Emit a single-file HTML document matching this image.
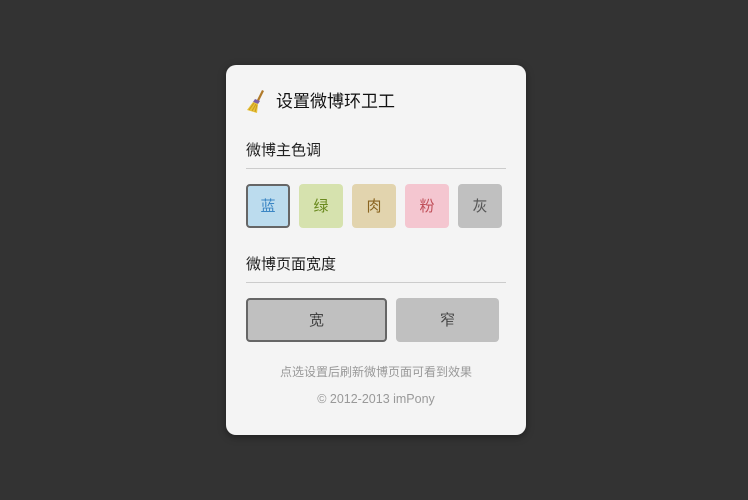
<!DOCTYPE html>
<html><head><meta charset="utf-8"><style>
*{margin:0;padding:0;box-sizing:border-box}
body{width:748px;height:500px;background:#333;font-family:"Liberation Sans","Noto Sans CJK SC",sans-serif;position:relative;overflow:hidden}
.card{position:absolute;left:226px;top:65px;width:300px;height:370px;background:#f4f4f4;border-radius:10px;box-shadow:0 2px 8px rgba(0,0,0,.4)}
.t{position:absolute;left:50px;top:25px;font-size:17px;color:#111;line-height:24px}
.h{position:absolute;left:20px;font-size:15px;color:#222;line-height:20px}
.line{position:absolute;left:20px;width:260px;height:1px;background:#ccc}
.b{position:absolute;top:119px;width:44px;height:44px;border-radius:4px;font-size:15px;text-align:center;line-height:46px}
.sel{border:2px solid #666;line-height:42px}
.w{position:absolute;top:233px;height:44px;border-radius:4px;background:#c0c0c0;font-size:15px;color:#444;text-align:center;line-height:46px}
.n{position:absolute;left:0;width:300px;text-align:center;font-size:12px;color:#999}
</style></head><body>
<div class="card">
<svg style="position:absolute;left:20px;top:24px" width="22" height="26" viewBox="0 0 22 26">
<path d="M16 1 L18 2 L13 12 L11 11Z" fill="#b07a2a"/>
<path d="M9 10 L14 12 L12 15 L7 13Z" fill="#7a5fa8"/>
<path d="M7 13 L12 15 L11 24 L1 21 Z" fill="#e8c23a"/>
<path d="M3 21 L8 14 M6 22 L10 15 M9 23 L11 16" stroke="#c99a1e" stroke-width="1"/>
</svg>
<div class="t">设置微博环卫工</div>
<div class="h" style="top:76px">微博主色调</div>
<div class="line" style="top:103px"></div>
<div class="b sel" style="left:20px;background:#bcdcee;color:#3b86c4">蓝</div>
<div class="b" style="left:73px;background:#d6e2ae;color:#6a8a1e">绿</div>
<div class="b" style="left:126px;background:#e2d4ae;color:#8a6420">肉</div>
<div class="b" style="left:179px;background:#f4c6d0;color:#c0505a">粉</div>
<div class="b" style="left:232px;background:#c0c0c0;color:#555">灰</div>
<div class="h" style="top:190px">微博页面宽度</div>
<div class="line" style="top:217px"></div>
<div class="w sel" style="left:20px;width:141px;line-height:42px">宽</div>
<div class="w" style="left:170px;width:103px">窄</div>
<div class="n" style="top:298px">点选设置后刷新微博页面可看到效果</div>
<div class="n" style="top:327px;font-size:12.5px">© 2012-2013 imPony</div>
</div>
</body></html>
